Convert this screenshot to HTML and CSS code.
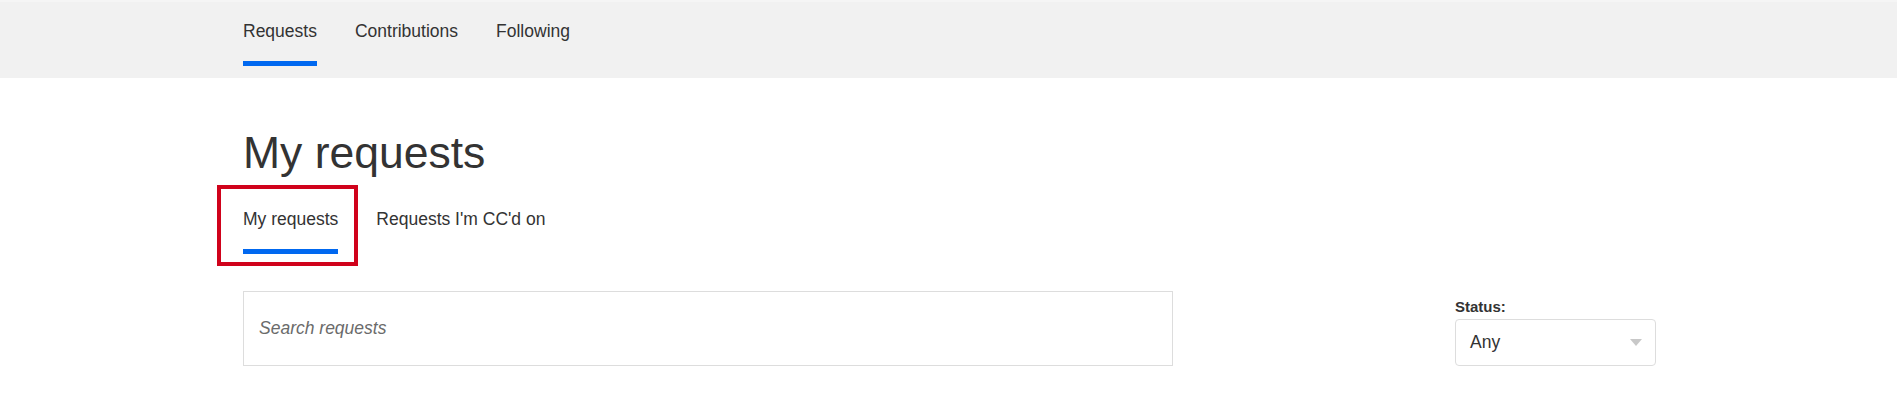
FILE: index.html
```html
<!DOCTYPE html>
<html>
<head>
  <title>My requests</title>
  <link rel="stylesheet" href="styles.css">
</head>
<body>
  <div class="navbar">
    <div class="container navbar-links">
      <a href="#" class="nav-link active">Requests</a>
      <a href="#" class="nav-link">Contributions</a>
      <a href="#" class="nav-link">Following</a>
    </div>
  </div>

  <div class="container">
    <h1 class="page-title">My requests</h1>

    <div class="tabs">
      <a href="#" class="tab active">
        My requests
        <span class="highlight"></span>
      </a>
      <a href="#" class="tab">Requests I'm CC'd on</a>
    </div>

    <div class="filters">
      <div class="search">
        <input type="text" class="search-input" placeholder="Search requests">
      </div>
      <div class="status-filter">
        <label class="status-label">Status:</label>
        <div class="select">
          <span>Any</span>
          <span class="select-arrow"></span>
        </div>
      </div>
    </div>
  </div>
</body>
</html>
```

FILE: styles.css
```css
/* Base */
body {
  margin: 0;
  padding: 0;
  font-family: "Liberation Sans", Arial, sans-serif;
  color: #333;
  background-color: #fff;
}

.container {
  width: 1413px;
  margin: 0 auto;
  position: relative;
  left: 1px;
}

/* Top navigation */
.navbar {
  background-color: #f1f1f1;
  border-top: 2px solid #f5f5f5;
  height: 76px;
}

.navbar-links {
  display: flex;
  gap: 38px;
}

.nav-link,
.tab {
  position: relative;
  display: block;
  padding: 19px 0 20px;
  font-size: 17.5px;
  line-height: 20px;
  color: #333;
  text-decoration: none;
  border-bottom: 5px solid transparent;
}

.nav-link.active,
.tab.active {
  border-bottom-color: #0068f0;
}

/* Page heading */
.page-title {
  margin: 0;
  padding-top: 50px;
  font-size: 44.5px;
  line-height: 50px;
  font-weight: normal;
  color: #333;
}

/* Sub tabs */
.tabs {
  display: flex;
  gap: 38px;
  margin-top: 10px;
}

.tab {
  padding-top: 21px;
}

/* Red annotation box */
.highlight {
  position: absolute;
  top: -3px;
  left: -26px;
  right: -20px;
  bottom: -17px;
  border: 4px solid #d0021b;
}

/* Search + filter row */
.filters {
  display: flex;
  justify-content: space-between;
  align-items: flex-end;
  margin-top: 37px;
}

.search-input {
  box-sizing: border-box;
  width: 930px;
  height: 75px;
  padding: 0 15px;
  border: 1px solid #ddd;
  font-family: "Liberation Sans", Arial, sans-serif;
  font-size: 17.5px;
  color: #333;
  outline: none;
}

.search-input::placeholder {
  font-style: italic;
  color: #6b6b6b;
}

.status-filter {
  width: 201px;
}

.status-label {
  display: block;
  margin-bottom: 3px;
  font-size: 15px;
  line-height: 18px;
  font-weight: bold;
  color: #333;
}

.select {
  box-sizing: border-box;
  height: 47px;
  display: flex;
  justify-content: space-between;
  align-items: center;
  padding: 0 13px 0 14px;
  border: 1px solid #ddd;
  border-radius: 4px;
  font-size: 17.5px;
  color: #333;
}

.select-arrow {
  width: 0;
  height: 0;
  border-left: 6px solid transparent;
  border-right: 6px solid transparent;
  border-top: 7px solid #c8c8c8;
}
```
